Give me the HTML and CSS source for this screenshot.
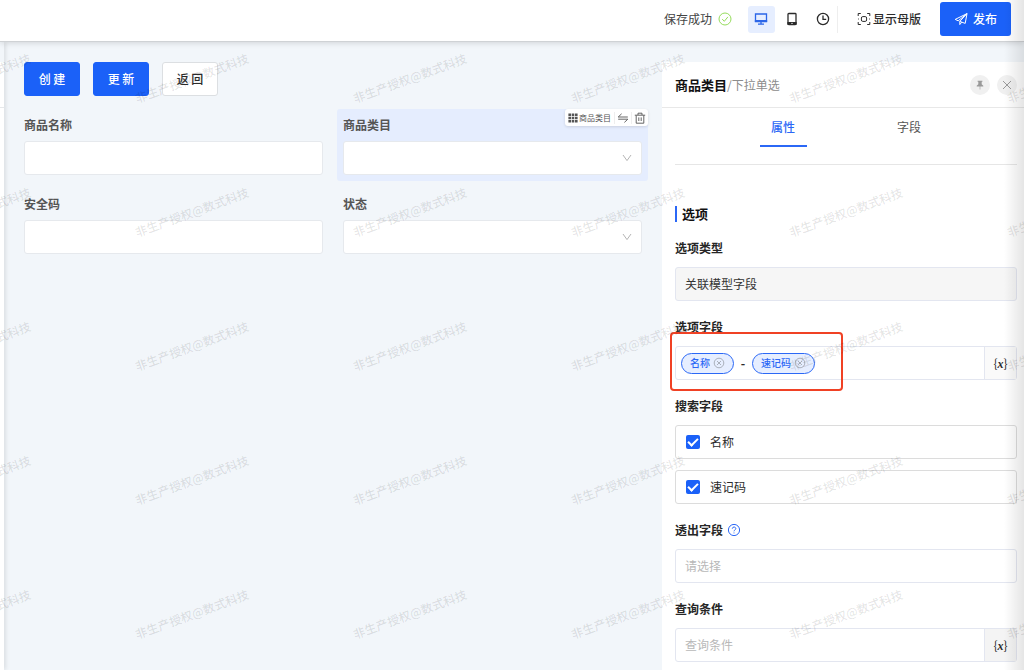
FILE: index.html
```html
<!DOCTYPE html>
<html lang="zh-CN">
<head>
<meta charset="utf-8">
<meta name="viewport" content="width=device-width, initial-scale=1">
<title>页面设计器</title>
<link rel="stylesheet" href="styles.css">
</head>
<body>
<div class="app">
  <header class="topbar">
    <span class="save-state">保存成功
      <svg class="icon-ok" viewBox="0 0 14 14" width="14" height="14"><circle cx="7" cy="7" r="6"/><path d="M4.2 7.1l2.1 2.2 3.6-4.4"/></svg>
    </span>
    <div class="devices">
      <button class="device active" type="button" aria-label="桌面端">
        <svg viewBox="0 0 14 14" width="14" height="14"><path d="M1.5 2h11v7.4h-11z"/><path d="M1.5 8.6h11v1h-11zM7 9.6v2.4M4 12.2h6"/></svg>
      </button>
      <button class="device" type="button" aria-label="移动端">
        <svg viewBox="0 0 14 14" width="14" height="14"><rect x="3" y="1.5" width="8" height="11" rx="0.8"/><path d="M3 10.6h8v1.6H3z" fill="currentColor"/><path d="M6.2 11.4h1.6" stroke="#fff" stroke-width="0.8"/></svg>
      </button>
      <button class="device" type="button" aria-label="历史">
        <svg viewBox="0 0 14 14" width="14" height="14"><circle cx="7" cy="7" r="5.6"/><path d="M7 3.6V7.4h3.2"/></svg>
      </button>
    </div>
    <button class="master" type="button">
      <svg viewBox="0 0 14 14" width="14" height="14"><path d="M1.2 4V1.5h2.6M10.2 1.5h2.6V4M12.8 10v2.5h-2.6M3.8 12.5H1.2V10"/><rect x="4.4" y="4.6" width="5.2" height="4.8" rx="1.4"/><path d="M1 7h.8M12.2 7h.8"/></svg>
      显示母版
    </button>
    <button class="publish" type="button">
      <svg viewBox="0 0 14 14" width="14" height="14"><path d="M13 1.6L1.2 7.4l3 1.4zM13 1.6L5.8 9.4M13 1.6l-1.8 9.8-5.4-2M5.8 9.4v3.2l1.9-2.4"/></svg>
      发布
    </button>
  </header>

  <div class="workspace">
    <aside class="rail"></aside>

    <main class="canvas">
      <div class="actions">
        <button class="btn primary" type="button">创 建</button>
        <button class="btn primary" type="button">更 新</button>
        <button class="btn" type="button">返 回</button>
      </div>
      <form class="form">
        <div class="item">
          <label for="f-name">商品名称</label>
          <input class="control" id="f-name" type="text">
        </div>
        <div class="item selected">
          <label for="f-cat">商品类目</label>
          <div class="select-wrap">
            <select class="control" id="f-cat"><option value=""></option></select>
            <svg class="caret" viewBox="0 0 10 10" width="10" height="10"><path d="M1 2l4 5.6L9 2"/></svg>
          </div>
          <div class="tools">
            <span class="tool-name">
              <svg viewBox="0 0 10 10" width="10" height="10"><path d="M.4.6h2.6v2.4H.4zM3.7.6h2.6v2.4H3.7zM7 .6h2.6v2.4H7zM.4 3.8h2.6v2.4H.4zM3.7 3.8h2.6v2.4H3.7zM7 3.8h2.6v2.4H7zM.4 7h2.6v2.4H.4zM3.7 7h2.6v2.4H3.7zM7 7h2.6v2.4H7z"/></svg>
              商品类目
            </span>
            <button type="button" aria-label="切换"><svg viewBox="0 0 12 12" width="12" height="12"><path d="M4.6 1.8L1.2 5h9.6M1.2 7.2h9.6L7.4 10.4"/></svg></button>
            <button type="button" aria-label="删除"><svg viewBox="0 0 12 12" width="12" height="12"><path d="M.8 3.2h10.4M4 3V1.2h4V3M2.2 3.4v7.8h7.6V3.4M4.8 5.4v3.6M7.2 5.4v3.6"/></svg></button>
          </div>
        </div>
        <div class="item">
          <label for="f-code">安全码</label>
          <input class="control" id="f-code" type="text">
        </div>
        <div class="item">
          <label for="f-status">状态</label>
          <div class="select-wrap">
            <select class="control" id="f-status"><option value=""></option></select>
            <svg class="caret" viewBox="0 0 10 10" width="10" height="10"><path d="M1 2l4 5.6L9 2"/></svg>
          </div>
        </div>
      </form>
    </main>

    <aside class="panel">
      <div class="panel-head">
        <h1>商品类目<small>/下拉单选</small></h1>
        <button class="round" type="button" aria-label="固定"><svg viewBox="0 0 10 10" width="10" height="10"><path d="M2.6.8h4.8v.9h-.7v2.5l1.6 1.6v.7H5.3v3h-.6v-3H1.7v-.7l1.6-1.6V1.7h-.7z" fill="currentColor" stroke="none"/></svg></button>
        <button class="round" type="button" aria-label="关闭"><svg viewBox="0 0 10 10" width="10" height="10"><path d="M1 1l8 8M9 1L1 9"/></svg></button>
      </div>
      <div class="panel-body">
        <div class="tabs" role="tablist">
          <button class="tab current" type="button" role="tab" aria-selected="true">属性</button>
          <button class="tab" type="button" role="tab" aria-selected="false">字段</button>
        </div>
        <h2>选项</h2>
        <div class="fields">
          <div class="field">
            <label for="p-type">选项类型</label>
            <select class="box" id="p-type" disabled><option>关联模型字段</option></select>
          </div>
          <div class="field">
            <span class="caption">选项字段</span>
            <div class="group highlighted">
              <div class="tags">
                <span class="tag">名称 <button type="button" aria-label="移除名称"><svg viewBox="0 0 12 12" width="12" height="12"><circle cx="6" cy="6" r="4.8"/><path d="M4 4l4 4M8 4L4 8"/></svg></button></span>
                <span class="dash">-</span>
                <span class="tag">速记码 <button type="button" aria-label="移除速记码"><svg viewBox="0 0 12 12" width="12" height="12"><circle cx="6" cy="6" r="4.8"/><path d="M4 4l4 4M8 4L4 8"/></svg></button></span>
              </div>
              <button class="fx light" type="button">{<i>x</i>}</button>
              <span class="callout"></span>
            </div>
          </div>
          <div class="field">
            <span class="caption">搜索字段</span>
            <div class="checks">
              <label class="check"><input type="checkbox" checked>名称</label>
              <label class="check"><input type="checkbox" checked>速记码</label>
            </div>
          </div>
          <div class="field">
            <label for="p-out">透出字段
              <svg class="help" viewBox="0 0 14 14" width="14" height="14"><circle cx="7" cy="7" r="5.6"/><path d="M5.3 5.7c0-2.3 3.5-2.1 3.5-.1 0 1.3-1.8 1.3-1.8 2.7M7 9.5v.9"/></svg>
            </label>
            <select class="box empty" id="p-out"><option>请选择</option></select>
          </div>
          <div class="field">
            <label for="p-query">查询条件</label>
            <div class="group">
              <input id="p-query" type="text" placeholder="查询条件">
              <button class="fx" type="button">{<i>x</i>}</button>
            </div>
          </div>
        </div>
      </div>
    </aside>
  </div>
  <div class="watermark" aria-hidden="true"></div>
  <div class="edge-shade"></div>
</div>
<script src="watermark.js"></script>
</body>
</html>
```
FILE: watermark.js
```js
const layer = document.querySelector('.watermark');
const columns = Math.ceil((window.innerWidth + 135) / 218);
const rows = Math.ceil(window.innerHeight / 134);
layer.style.setProperty('--columns', columns);
for (let i = 0; i < columns * rows; i++) {
  const mark = document.createElement('span');
  mark.textContent = '非生产授权@数式科技';
  layer.append(mark);
}
```
FILE: styles.css
```css
* { box-sizing: border-box; }

body {
  margin: 0;
  font: 12px/20px "Noto Sans CJK SC", sans-serif;
  color: #2b2b2b;
}

button, input, select { font: inherit; color: inherit; margin: 0; }
button { padding: 0; border: 0; background: none; cursor: pointer; }
svg { display: block; flex: none; fill: none; stroke: currentColor; }

.app {
  position: relative;
  display: flex;
  flex-direction: column;
  height: 100vh;
  overflow: hidden;
  background: #f2f6fa;
}

.topbar {
  position: relative;
  z-index: 2;
  display: flex;
  flex: none;
  align-items: center;
  justify-content: flex-end;
  padding: 2px 13px 5px;
  background: #fff;
  border-bottom: 1px solid #cfd2d5;
  box-shadow: 0 1px 6px rgba(0, 0, 0, 0.14);
}
.save-state { display: flex; align-items: center; gap: 6px; color: #444; }
.icon-ok { color: #95dc5c; }
.devices {
  display: flex;
  gap: 4px;
  margin-left: 16px;
  border-right: 1px solid #eee;
}
.device {
  display: grid;
  place-items: center;
  width: 27px;
  height: 27px;
  border-radius: 3px;
}
.device svg { stroke-width: 1.3; }
.device.active { background: #e6eeff; color: #2b65e8; }
.master {
  display: flex;
  align-items: center;
  gap: 2px;
  margin: 0 19px;
  font-weight: 500;
}
.publish {
  display: flex;
  align-items: center;
  justify-content: center;
  gap: 5px;
  width: 71px;
  height: 34px;
  border-radius: 3px;
  background: #1b61f8;
  color: #fff;
  font-weight: 500;
}

.workspace { display: flex; flex: 1; min-height: 0; }
.rail {
  position: relative;
  width: 4px;
  background: linear-gradient(#f2f6fa 20px, #fff 20px, #fff 65px, #e6e8ea 65px, #e6e8ea 66px, #fff 66px);
  box-shadow: 1px 0 5px rgba(0, 0, 0, 0.14);
}

.canvas { flex: 1; padding: 20px 14px; }
.actions { display: flex; gap: 13px; padding: 0 6px; margin-bottom: 13px; }
.btn {
  width: 56px;
  height: 34px;
  border: 1px solid #dcdfe2;
  border-radius: 3px;
  background: #fff;
  font-weight: 500;
}
.btn.primary { border-color: #1b61f8; background: #1b61f8; color: #fff; }

.form {
  display: grid;
  grid-template-columns: 1fr 1fr;
  gap: 7px 8px;
}
.item {
  position: relative;
  display: flex;
  flex-direction: column;
  gap: 6px;
  padding: 6px;
  border-radius: 3px;
}
.item.selected { background: #e5edfe; }
.item label { font-weight: 700; color: #555; }
.control {
  display: block;
  width: 100%;
  height: 34px;
  padding: 0 10px;
  border: 1px solid #e6e9ed;
  border-radius: 3px;
  background: #fff;
  appearance: none;
}
.select-wrap { position: relative; }
.caret { position: absolute; right: 10px; top: 12px; color: #b5b5b5; }

.tools {
  position: absolute;
  top: 0;
  right: 0;
  display: flex;
  align-items: center;
  height: 17px;
  padding: 0 0 0 3px;
  border-radius: 3px;
  background: #fff;
  box-shadow: 0 1px 3px rgba(0, 0, 0, 0.12);
  color: #555;
}
.tools svg { stroke-width: 0.9; }
.tools button { padding: 0 2px; border-left: 1px solid #eee; }
.tool-name { display: flex; align-items: center; gap: 1px; padding-right: 3px; font-size: 8px; line-height: 16px; }
.tool-name svg { fill: currentColor; stroke: none; }

.panel {
  display: flex;
  flex-direction: column;
  width: 362px;
  margin-top: 20px;
  background: #fff;
}
.panel-head {
  display: flex;
  align-items: center;
  gap: 7px;
  height: 46px;
  padding: 0 7px 0 13px;
  border-bottom: 1px solid #e8e8e8;
}
h1, h2 { margin: 0; font-size: 13px; line-height: 20px; color: #111; }
h1 { flex: 1; font-weight: 700; }
h1 small { font-size: 12px; font-weight: 400; color: #8c8c8c; }
.round {
  display: grid;
  place-items: center;
  width: 20px;
  height: 20px;
  border-radius: 50%;
  background: #f0f0f0;
  color: #999;
}
.panel-body { padding: 0 7px 8px 13px; }
.tabs {
  display: flex;
  justify-content: center;
  gap: 79px;
  padding: 9px 0 17px;
  border-bottom: 1px solid #e6e6e6;
}
.tab {
  width: 47px;
  padding-bottom: 8px;
  border-bottom: 2px solid transparent;
  color: #555;
}
.tab.current { border-color: #2b68f6; color: #2b68f6; font-weight: 500; }
h2 {
  display: flex;
  align-items: center;
  gap: 5px;
  margin: 39px 0 14px;
  font-weight: 700;
}
h2::before { content: ""; width: 2px; height: 16px; background: #2b68f6; }

.fields { display: flex; flex-direction: column; gap: 16px; }
.field { display: flex; flex-direction: column; gap: 9px; }
.field > label, .caption {
  display: flex;
  align-items: center;
  gap: 4px;
  font-weight: 700;
  color: #262626;
}
.help { color: #2b68f6; }
.box, .check, .group {
  width: 100%;
  height: 34px;
  border: 1px solid #e3e6f0;
  border-radius: 3px;
  background: #fff;
}
.box { padding: 0 9px; appearance: none; }
.box:disabled { background: #f6f6f6; color: #333; opacity: 1; }
.box.empty { color: #b8b8b8; }

.group { position: relative; display: flex; }
.group input {
  flex: 1;
  min-width: 0;
  padding: 0 9px;
  border: 0;
  background: none;
  outline: 0;
}
.group input::placeholder { color: #b8b8b8; }
.fx {
  width: 32px;
  border-left: 1px solid #e3e6f0;
  background: #f4f4f4;
}
.fx.light { background: #fafafa; }
.fx i { font-family: "Liberation Serif", serif; font-weight: 700; }
.tags { display: flex; flex: 1; align-items: center; gap: 5px; padding: 0 5px; }
.tag {
  display: flex;
  align-items: center;
  gap: 3px;
  height: 21px;
  padding: 0 8px;
  border: 1px solid #2b68f6;
  border-radius: 11px;
  background: #e6eeff;
  color: #2b68f6;
  font-size: 10px;
  font-weight: 500;
}
.tag button { color: #aab0bb; }
.dash { width: 8px; text-align: center; font-weight: 700; }
.callout {
  position: absolute;
  inset: -15px auto -12px -6px;
  width: 173px;
  border: 2px solid #f04124;
  border-radius: 4px;
  pointer-events: none;
}

.checks { display: flex; flex-direction: column; gap: 11px; }
.check {
  display: flex;
  align-items: center;
  gap: 10px;
  padding: 0 10px;
  border-color: #dcdcdc;
}
.check input {
  display: grid;
  place-items: center;
  width: 14px;
  height: 14px;
  border-radius: 2px;
  background: #1b61f8;
  appearance: none;
}
.check input::before {
  content: "";
  width: 8px;
  height: 4px;
  margin-bottom: 2px;
  border: solid #fff;
  border-width: 0 0 2px 2px;
  rotate: -45deg;
}

.watermark {
  position: absolute;
  inset: 11px 0 0 -135px;
  z-index: 1;
  display: grid;
  grid-template-columns: repeat(var(--columns, 6), 218px);
  grid-auto-rows: 134px;
  place-items: center;
  overflow: hidden;
  color: rgba(0, 0, 0, 0.11);
  font-weight: 500;
  pointer-events: none;
}
.watermark span { white-space: nowrap; rotate: -20deg; }

.edge-shade {
  position: absolute;
  inset: 0 0 0 auto;
  z-index: 3;
  width: 20px;
  background: linear-gradient(to right, rgba(0, 0, 0, 0), rgba(0, 0, 0, 0.1));
  pointer-events: none;
}
```
